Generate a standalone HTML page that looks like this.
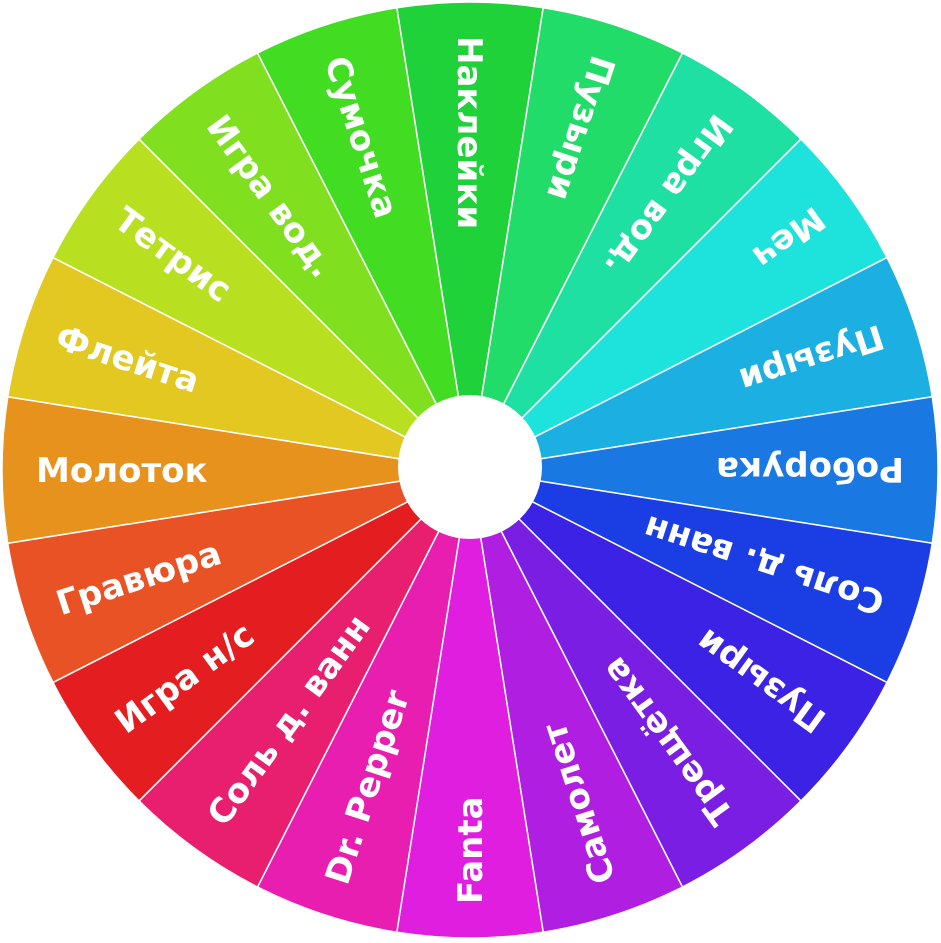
<!DOCTYPE html>
<html><head><meta charset="utf-8"><style>
html,body{margin:0;padding:0;background:#fff;width:941px;height:943px;overflow:hidden}
svg{display:block}
text{font-family:"DejaVu Sans","Liberation Sans",sans-serif;font-weight:bold;font-size:34px;fill:#fff}
</style></head><body>
<svg width="941" height="943" viewBox="0 0 941 943">
<g id="w"></g>
<circle cx="470" cy="467" r="72" fill="#fff"/>
</svg>
<script>
const items=[["Наклейки","#1fd23a"],["Пузыри","#22dc6a"],["Игра вод.","#1ee0a2"],["Меч","#1ee2dc"],["Пузыри","#1cb0e2"],["Роборука","#1a78e2"],["Соль д. ванн","#1a3ee4"],["Пузыри","#3c22e4"],["Трещётка","#7a1ee4"],["Самолет","#b01ee2"],["Fanta","#e01ee0"],["Dr. Pepper","#e81eb0"],["Соль д. ванн","#e81e6e"],["Игра н/с","#e41e20"],["Гравюра","#e85224"],["Молоток","#e8921e"],["Флейта","#e2c820"],["Тетрис","#b8e020"],["Игра вод.","#80e020"],["Сумочка","#42dc22"]];
const cx=470,cy=470,R=468,g=document.getElementById('w');let h='';
items.forEach((it,i)=>{const c=-90+18*i,a1=(c-9)*Math.PI/180,a2=(c+9)*Math.PI/180;
const x1=cx+R*Math.cos(a1),y1=cy+R*Math.sin(a1),x2=cx+R*Math.cos(a2),y2=cy+R*Math.sin(a2);
h+=`<path d="M${cx},${cy}L${x1},${y1}A${R},${R} 0 0 1 ${x2},${y2}Z" fill="${it[1]}" stroke="#fff" stroke-width="1.5"/>`;
h+=`<g transform="translate(${cx},${cy}) rotate(${c+180})"><text x="-434" y="12">${it[0]}</text></g>`;});
g.innerHTML=h;
</script>
</body></html>
